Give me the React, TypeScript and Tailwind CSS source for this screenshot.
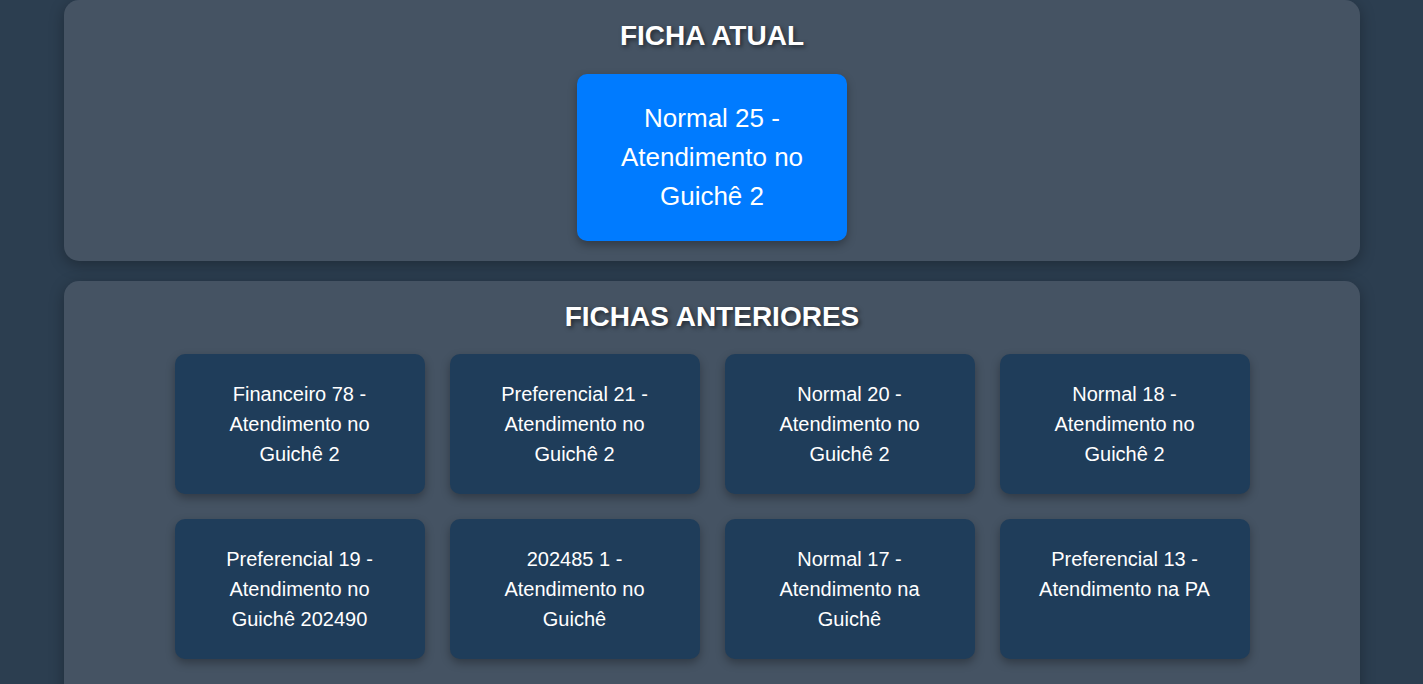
import React from 'react';

const previous = [
  'Financeiro 78 - Atendimento no Guichê 2',
  'Preferencial 21 - Atendimento no Guichê 2',
  'Normal 20 - Atendimento no Guichê 2',
  'Normal 18 - Atendimento no Guichê 2',
  'Preferencial 19 - Atendimento no Guichê 202490',
  '202485 1 - Atendimento no Guichê',
  'Normal 17 - Atendimento na Guichê',
  'Preferencial 13 - Atendimento na PA',
];

const App: React.FC = () => {
  return (
    <div className="min-h-screen bg-[#2c3e50] text-white font-['Liberation_Sans',Arial,sans-serif]">
      <div className="ml-16 w-[1296px] flex flex-col gap-5 pb-5">
        {/* Ficha atual */}
        <section className="bg-[#455363] rounded-[15px] p-5 flex flex-col items-center shadow-[0_4px_15px_rgba(0,0,0,0.3)]">
          <h2 className="text-[28px] leading-[32px] font-bold mb-[22px] [text-shadow:2px_2px_4px_rgba(0,0,0,0.5)]">
            FICHA ATUAL
          </h2>
          <div className="w-[270px] bg-[#007bff] rounded-[10px] p-[25px] text-center text-[26px] leading-[1.5] shadow-[0_4px_10px_rgba(0,0,0,0.3)]">
            Normal 25 - Atendimento no Guichê 2
          </div>
        </section>

        {/* Fichas anteriores */}
        <section className="bg-[#455363] rounded-[15px] px-5 pt-5 pb-10 flex flex-col items-center shadow-[0_4px_15px_rgba(0,0,0,0.3)]">
          <h2 className="text-[28px] leading-[32px] font-bold mb-[21px] [text-shadow:2px_2px_4px_rgba(0,0,0,0.5)]">
            FICHAS ANTERIORES
          </h2>
          <div className="grid grid-cols-[repeat(4,250px)] gap-[25px]">
            {previous.map((f) => (
              <div
                key={f}
                className="bg-[#1f3d5a] rounded-[10px] p-[25px] min-h-[140px] text-center text-[20px] leading-[1.5] shadow-[0_4px_10px_rgba(0,0,0,0.3)]"
              >
                {f}
              </div>
            ))}
          </div>
        </section>
      </div>
    </div>
  );
};

export default App;
